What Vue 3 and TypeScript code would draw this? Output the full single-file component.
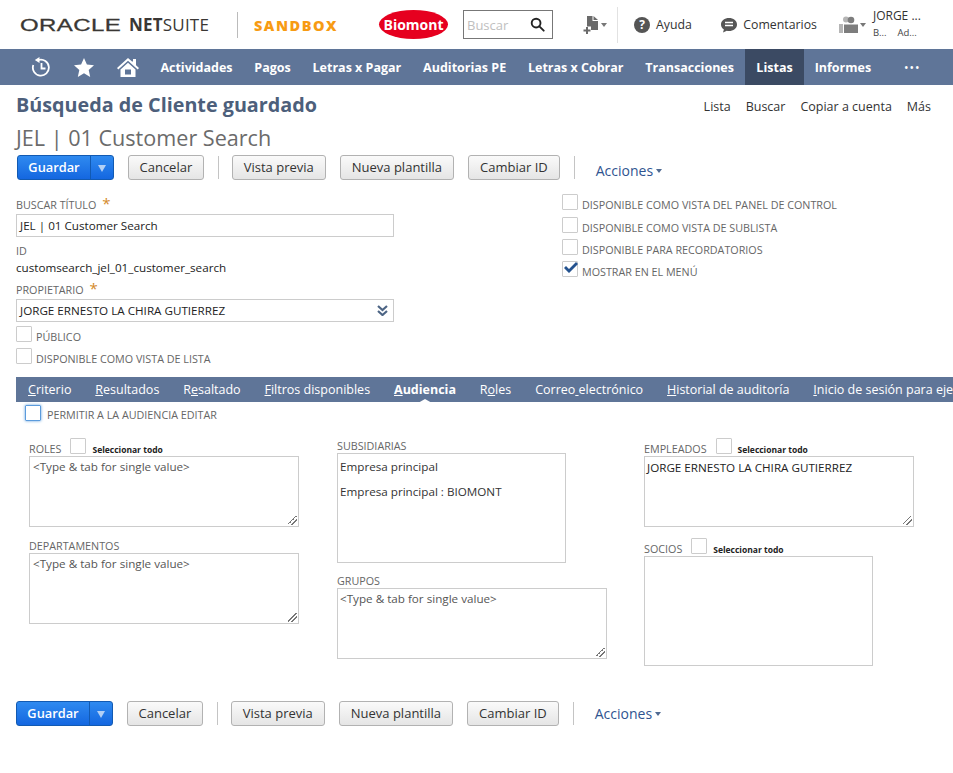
<template>
  <div class="page">
    <header class="top">
      <div class="brand">
        <span class="oracle">ORACLE</span>
        <span class="netsuite"><b>NET</b>SUITE</span>
      </div>
      <div class="brand-sep"></div>
      <span class="sandbox">SANDBOX</span>
      <div class="biomont"><span>Biomont</span></div>
      <div class="search">
        <span class="search-ph">Buscar</span>
        <svg width="15" height="15" viewBox="0 0 16 16" fill="none" stroke="#222" stroke-width="2">
          <circle cx="6.500" cy="6.500" r="4.700" />
          <path d="M10 10l4.600 4.600" stroke-linecap="round" />
        </svg>
      </div>
      <div class="new-rec">
        <svg width="16" height="18" viewBox="0 0 16 18" fill="#6a6a6a">
          <path d="M4 0h5.500v5H15v9H8v-3.500H4z" />
          <path d="M10.500 0L15 4h-4.500z" />
          <path d="M3 11h2v2.500h2.500v2H5V18H3v-2.500H.5v-2H3z" />
        </svg>
        <i class="caret"></i>
      </div>
      <div class="top-sep"></div>
      <div class="top-link help">
        <svg width="16" height="16" viewBox="0 0 16 16">
          <circle cx="8" cy="8" r="8" fill="#555" />
          <text x="8" y="12" text-anchor="middle" class="q">?</text>
        </svg>
        <span>Ayuda</span>
      </div>
      <div class="top-link comments">
        <svg width="16" height="16" viewBox="0 0 16 16" fill="#555">
          <path d="M8 1c4.200 0 8 2.500 8 6.500S12.200 14 8 14c-.8 0-1.500-.1-2.200-.3L2 15.500l.9-3C1 11.300 0 9.500 0 7.500 0 3.500 3.800 1 8 1z" />
          <path d="M4 5.500h8M4 8.500h8" stroke="#fff" stroke-width="1.500" />
        </svg>
        <span>Comentarios</span>
      </div>
      <div class="role-ico">
        <svg width="20" height="18" viewBox="0 0 20 18" fill="#b5b5b5">
          <circle cx="7" cy="3.500" r="3" />
          <path d="M0 8h4v9H0z" />
          <circle cx="12" cy="4" r="3.300" fill="#7d7d7d" />
          <path d="M5 8.500h14V17H5z" fill="#7d7d7d" />
        </svg>
        <i class="caret"></i>
      </div>
      <div class="user">
        <div class="user-name">JORGE ...</div>
        <div class="user-sub"><span>B...</span><span>Ad...</span></div>
      </div>
    </header>

    <nav class="nav">
      <div class="nav-icons">
        <svg width="20" height="20" viewBox="0 0 20 20" fill="none" stroke="#fff" stroke-width="1.800">
          <path d="M7.500 3A8 8 0 1 1 2.300 8" />
          <path d="M8.500 0L3.800 3l4.700 3z" fill="#fff" stroke="none" />
          <path d="M10.500 6v5.500h4" />
        </svg>
        <svg width="20" height="19" viewBox="0 0 20 19" fill="#fff">
          <path d="M10 0l2.900 6.400 7.100.8-5.300 4.700 1.500 7-6.200-3.600-6.200 3.600 1.500-7L0 7.200l7.100-.8z" />
        </svg>
        <svg width="22" height="19" viewBox="0 0 22 19" fill="#fff" fill-rule="evenodd">
          <path d="M11 0L0 10l1.300 1.400L11 2.700l9.700 8.700L22 10l-3-2.700V1h-3v2.500l-1 .1z" />
          <path d="M3.500 11.500L11 4.800l7.500 6.700V19h-15zM8 11.500v5h6v-5z" />
        </svg>
      </div>
      <a v-for="item in navItems" :key="item" class="nav-item" :class="{ active: item === 'Listas', after: item === 'Informes' }">{{ item }}</a>
      <span class="nav-more">•••</span>
    </nav>

    <main class="content">
      <div class="title-row">
        <h1>Búsqueda de Cliente guardado</h1>
        <div class="page-links">
          <a v-for="link in pageLinks" :key="link">{{ link }}</a>
        </div>
      </div>
      <div class="record-name">JEL | 01 Customer Search</div>

      <div class="toolbar upper">
        <div class="btn-save">
          <span class="save-label">Guardar</span>
          <span class="save-arrow"></span>
        </div>
        <button class="btn">Cancelar</button>
        <div class="tool-sep"></div>
        <button class="btn">Vista previa</button>
        <button class="btn">Nueva plantilla</button>
        <button class="btn">Cambiar ID</button>
        <div class="tool-sep"></div>
        <span class="actions">Acciones<i class="caret blue"></i></span>
      </div>

      <section class="form">
        <div class="form-left">
          <label class="lbl">BUSCAR TÍTULO <em>*</em></label>
          <div class="field">JEL | 01 Customer Search</div>
          <label class="lbl id-lbl">ID</label>
          <div class="id-val">customsearch_jel_01_customer_search</div>
          <label class="lbl owner-lbl">PROPIETARIO <em>*</em></label>
          <div class="field select">
            <span>JORGE ERNESTO LA CHIRA GUTIERREZ</span>
            <svg width="11" height="11" viewBox="0 0 11 11" fill="none" stroke="#4d6585" stroke-width="2.200">
              <path d="M1 1l4.500 4 4.500-4M1 6l4.500 4 4.500-4" />
            </svg>
          </div>
          <div class="check-row first"><span class="box"></span><span class="lbl">PÚBLICO</span></div>
          <div class="check-row"><span class="box"></span><span class="lbl">DISPONIBLE COMO VISTA DE LISTA</span></div>
        </div>
        <div class="form-right">
          <div v-for="opt in rightChecks" :key="opt.label" class="check-row">
            <span class="box">
              <svg v-if="opt.on" width="14" height="12" viewBox="0 0 14 12" fill="#24528f">
                <path d="M0 6l2-2 3 3 7-7 2 2-9 9z" />
              </svg>
            </span>
            <span class="lbl">{{ opt.label }}</span>
          </div>
        </div>
      </section>

      <div class="tabs">
        <a v-for="tab in tabs" :key="tab.text" class="tab" :class="{ active: tab.active }">{{ tab.pre }}<u>{{ tab.key }}</u>{{ tab.post }}</a>
      </div>

      <div class="edit-row">
        <span class="box focus"></span>
        <span class="lbl">PERMITIR A LA AUDIENCIA EDITAR</span>
      </div>

      <section class="audience">
        <div class="aud-col col1">
          <div class="aud-head"><span class="lbl">ROLES</span><span class="box"></span><span class="sel-all">Seleccionar todo</span></div>
          <div class="list w270 h71 ph">&lt;Type &amp; tab for single value&gt;<i class="grip"></i></div>
          <div class="aud-head plain dept"><span class="lbl">DEPARTAMENTOS</span></div>
          <div class="list w270 h71 ph">&lt;Type &amp; tab for single value&gt;<i class="grip"></i></div>
        </div>
        <div class="aud-col col2">
          <div class="aud-head plain"><span class="lbl">SUBSIDIARIAS</span></div>
          <div class="list subs">
            <div>Empresa principal</div>
            <div>Empresa principal : BIOMONT</div>
          </div>
          <div class="aud-head plain groups"><span class="lbl">GRUPOS</span></div>
          <div class="list w270 h71 ph">&lt;Type &amp; tab for single value&gt;<i class="grip"></i></div>
        </div>
        <div class="aud-col col3">
          <div class="aud-head"><span class="lbl">EMPLEADOS</span><span class="box"></span><span class="sel-all">Seleccionar todo</span></div>
          <div class="list emp">JORGE ERNESTO LA CHIRA GUTIERREZ<i class="grip"></i></div>
          <div class="aud-head partners"><span class="lbl">SOCIOS</span><span class="box"></span><span class="sel-all">Seleccionar todo</span></div>
          <div class="list socios"></div>
        </div>
      </section>

      <div class="toolbar">
        <div class="btn-save">
          <span class="save-label">Guardar</span>
          <span class="save-arrow"></span>
        </div>
        <button class="btn">Cancelar</button>
        <div class="tool-sep"></div>
        <button class="btn">Vista previa</button>
        <button class="btn">Nueva plantilla</button>
        <button class="btn">Cambiar ID</button>
        <div class="tool-sep"></div>
        <span class="actions">Acciones<i class="caret blue"></i></span>
      </div>
    </main>
  </div>
</template>

<script setup lang="ts">
interface Tab {
  text: string;
  pre: string;
  key: string;
  post: string;
  active?: boolean;
}

const navItems: string[] = [
  'Actividades',
  'Pagos',
  'Letras x Pagar',
  'Auditorias PE',
  'Letras x Cobrar',
  'Transacciones',
  'Listas',
  'Informes'
];

const pageLinks: string[] = ['Lista', 'Buscar', 'Copiar a cuenta', 'Más'];

const rightChecks = [
  { label: 'DISPONIBLE COMO VISTA DEL PANEL DE CONTROL', on: false },
  { label: 'DISPONIBLE COMO VISTA DE SUBLISTA', on: false },
  { label: 'DISPONIBLE PARA RECORDATORIOS', on: false },
  { label: 'MOSTRAR EN EL MENÚ', on: true }
];

const tabs: Tab[] = [
  { text: 'Criterio', pre: '', key: 'C', post: 'riterio' },
  { text: 'Resultados', pre: '', key: 'R', post: 'esultados' },
  { text: 'Resaltado', pre: 'R', key: 'e', post: 'saltado' },
  { text: 'Filtros disponibles', pre: '', key: 'F', post: 'iltros disponibles' },
  { text: 'Audiencia', pre: '', key: 'A', post: 'udiencia', active: true },
  { text: 'Roles', pre: 'R', key: 'o', post: 'les' },
  { text: 'Correo electrónico', pre: 'Correo', key: ' ', post: 'electrónico' },
  { text: 'Historial de auditoría', pre: '', key: 'H', post: 'istorial de auditoría' },
  { text: 'Inicio de sesión para ejecución', pre: '', key: 'I', post: 'nicio de sesión para ejecución' }
];
</script>

<style>
html,
body {
  margin: 0;
  background: #fff;
}
</style>

<style scoped>
.page {
  width: 953px;
  height: 773px;
  overflow: hidden;
  font-family: "Open Sans", "Liberation Sans", sans-serif;
  font-size: 11.660px;
  color: #222;
}

/* top bar */
.top {
  height: 49px;
  display: flex;
  align-items: center;
}
.brand {
  margin-left: 20px;
  display: flex;
  align-items: center;
  width: 190px;
  flex: none;
  white-space: nowrap;
}
.oracle {
  font-family: "Liberation Sans", sans-serif;
  font-size: 17px;
  color: #3a3734;
  display: inline-block;
  transform: translateY(1px) scaleX(1.41);
  transform-origin: left center;
  width: 109px;
  letter-spacing: 0.3px;
  -webkit-text-stroke: 0.3px #3a3734;
}
.netsuite {
  font-size: 17px;
  color: #3a3734;
  letter-spacing: 0.2px;
}
.netsuite b {
  font-weight: 700;
}
.brand-sep {
  width: 1px;
  height: 26px;
  background: #bbb;
  margin-left: 27px;
  flex: none;
}
.sandbox {
  margin-left: 16px;
  width: 84px;
  flex: none;
  font-size: 14.500px;
  font-weight: 800;
  letter-spacing: 1.500px;
  color: #f79b13;
  padding-top: 2px;
}
.biomont {
  margin-left: 41px;
  width: 69px;
  height: 29px;
  flex: none;
  border-radius: 50%;
  background: #e6001f;
  display: flex;
  align-items: center;
  justify-content: center;
}
.biomont span {
  color: #fff;
  font-size: 14px;
  font-weight: 700;
}
.search {
  margin-left: 15px;
  width: 90px;
  height: 29px;
  border: 1px solid #777;
  box-sizing: border-box;
  display: flex;
  align-items: center;
  justify-content: space-between;
  padding: 0 7px 0 3px;
  flex: none;
}
.search-ph {
  font-size: 13px;
  color: #c0c0c0;
}
.new-rec {
  margin-left: 30px;
  display: flex;
  align-items: center;
  gap: 2px;
  flex: none;
  width: 27px;
}
.caret {
  display: inline-block;
  width: 0;
  height: 0;
  border-left: 3.500px solid transparent;
  border-right: 3.500px solid transparent;
  border-top: 4px solid #777;
}
.top-sep {
  width: 1px;
  height: 36px;
  background: #e2e2e2;
  margin-left: 7px;
  flex: none;
}
.top-link {
  display: flex;
  align-items: center;
  gap: 6px;
  font-size: 12.300px;
  color: #333;
  flex: none;
}
.help {
  margin-left: 16px;
}
.comments {
  margin-left: 29.500px;
}
.q {
  font-size: 12px;
  font-weight: 700;
  fill: #fff;
}
.role-ico {
  margin-left: 22px;
  width: 30px;
  display: flex;
  align-items: center;
  gap: 1px;
  flex: none;
}
.user {
  margin-left: 4px;
  line-height: 1;
  margin-top: -2px;
}
.user-name {
  font-size: 12px;
  color: #333;
  margin-bottom: 6px;
}
.user-sub {
  font-size: 9.500px;
  color: #444;
  display: flex;
  gap: 11px;
}

/* main nav */
.nav {
  height: 36px;
  background: #5f7598;
  display: flex;
  align-items: stretch;
  padding-left: 31px;
}
.nav-icons {
  display: flex;
  align-items: center;
  gap: 23px;
  margin-right: 10.500px;
}
.nav-item {
  display: flex;
  align-items: center;
  padding: 0 10.900px;
  color: #fff;
  font-size: 12.500px;
  font-weight: 700;
}
.nav-item.active {
  background: #3b4a63;
  padding: 0 11px 0 11.500px;
}
.nav-item.after {
  padding-left: 11px;
}
.nav-more {
  align-self: center;
  margin-left: 22px;
  color: #fff;
  font-size: 12px;
  letter-spacing: 1px;
}

/* content */
.content {
  padding-left: 16px;
}
.title-row {
  display: flex;
  justify-content: space-between;
  align-items: center;
  height: 27px;
  margin-top: 6px;
  padding-right: 22px;
}
h1 {
  margin: 0;
  font-size: 19.750px;
  font-weight: 700;
  color: #4d5f7b;
}
.page-links {
  display: flex;
  gap: 15px;
  font-size: 12.500px;
  color: #333;
  margin-top: 4px;
}
.record-name {
  font-size: 21.600px;
  color: #6b6b6b;
  height: 34px;
  line-height: 34px;
  padding-top: 3px;
}
.toolbar {
  display: flex;
  align-items: center;
  height: 25px;
}
.toolbar.upper {
  margin-left: 1px;
}
.toolbar.upper .actions {
  margin-top: 6px;
}
.btn-save {
  width: 97px;
  height: 25px;
  box-sizing: border-box;
  border-radius: 3px;
  border: 1px solid #125ab2;
  background: linear-gradient(#2f8af0, #1467e0);
  display: flex;
  flex: none;
}
.save-label {
  width: 73px;
  box-sizing: border-box;
  color: #fff;
  font-size: 12.800px;
  font-weight: 600;
  text-align: center;
  line-height: 22px;
  border-right: 1px solid #125ab2;
}
.save-arrow {
  flex: 1;
  position: relative;
}
.save-arrow::after {
  content: "";
  position: absolute;
  left: 7px;
  top: 9px;
  border-left: 4px solid transparent;
  border-right: 4px solid transparent;
  border-top: 7px solid #b3d0f5;
}
.btn {
  height: 25px;
  padding: 0 11px 1px;
  box-sizing: border-box;
  border: 1px solid #b2b2b2;
  border-radius: 3px;
  background: linear-gradient(#fafafa, #e5e5e5);
  font-family: inherit;
  font-size: 13px;
  color: #333;
  margin-right: 14px;
  flex: none;
}
.btn-save + .btn {
  margin-left: 14px;
  padding: 0 10.500px 1px;
}
.tool-sep {
  width: 1px;
  height: 23px;
  background: #c4c4c4;
  margin-right: 13px;
  flex: none;
}
.actions {
  margin-left: 8px;
  font-size: 14px;
  color: #2f5490;
  display: flex;
  align-items: center;
  gap: 3px;
}
.caret.blue {
  border-top-color: #4f6a92;
}

/* form */
.form {
  display: flex;
  margin-top: 18px;
  height: 179px;
}
.form-left {
  width: 378px;
  flex: none;
}
.form-right {
  margin-left: 168px;
  margin-top: -7px;
}
.lbl {
  display: block;
  font-size: 10.750px;
  color: #666;
  line-height: 15px;
  white-space: nowrap;
}
.lbl em {
  font-style: normal;
  font-size: 15px;
  line-height: 10px;
  color: #d48a2a;
  margin-left: 3px;
}
.field {
  height: 23px;
  box-sizing: border-box;
  border: 1px solid #ccc;
  line-height: 21px;
  padding-left: 3px;
  margin-top: 1px;
  color: #222;
}
.select {
  display: flex;
  justify-content: space-between;
  align-items: center;
  padding-right: 5px;
}
.id-lbl {
  margin-top: 7px;
}
.id-val {
  line-height: 17px;
  color: #222;
}
.owner-lbl {
  margin-top: 7px;
}
.check-row {
  display: flex;
  align-items: flex-end;
  height: 22.330px;
  gap: 4px;
}
.form-left .check-row {
  height: 22.500px;
}
.form-left .check-row.first {
  margin-top: 2px;
  height: 20.500px;
}
.box {
  display: inline-block;
  position: relative;
  width: 16px;
  height: 16px;
  box-sizing: border-box;
  border: 1px solid #ccc;
  border-radius: 1px;
  flex: none;
  margin-bottom: 3px;
}
.box svg {
  position: absolute;
  left: 1px;
  top: 0;
}
.check-row .lbl {
  line-height: 16px;
}

/* tabs */
.tabs {
  height: 25px;
  background: #5f7598;
  display: flex;
  align-items: center;
  padding-left: 12px;
  gap: 23.900px;
  white-space: nowrap;
  overflow: hidden;
}
.tab {
  color: #fff;
  font-size: 12.500px;
  position: relative;
  white-space: pre;
}
.tab.active {
  font-weight: 700;
}
.tab.active::after {
  content: "";
  position: absolute;
  left: 50%;
  margin-left: -7px;
  bottom: -5px;
  border-left: 7px solid transparent;
  border-right: 7px solid transparent;
  border-bottom: 4px solid #fff;
}
.edit-row {
  display: flex;
  align-items: center;
  gap: 6px;
  padding-left: 9px;
  height: 24px;
}
.edit-row .lbl {
  margin-top: 2px;
}
.box.focus {
  border: 1px solid #5b9bdc;
  box-shadow: 0 0 3px #5b9bdc;
}

/* audience */
.audience {
  display: flex;
  margin-top: 12px;
  padding-left: 13px;
  height: 263px;
}
.aud-col {
  flex: none;
}
.col1 {
  width: 308px;
}
.col2 {
  width: 307px;
}
.aud-head {
  height: 18px;
  display: flex;
  align-items: flex-end;
  gap: 6px;
}
.aud-head .lbl {
  line-height: 15px;
  margin-right: 3px;
  margin-bottom: -1px;
}
.aud-head .box {
  margin-bottom: 2px;
}
.aud-head.plain {
  height: 15px;
}
.sel-all {
  font-size: 8.500px;
  font-weight: 700;
  line-height: 13px;
  color: #222;
}
.list {
  box-sizing: border-box;
  border: 1px solid #ccc;
  position: relative;
  color: #333;
}
.w270 {
  width: 270px;
}
.h71 {
  height: 71px;
}
.ph {
  padding: 2px 3px;
  color: #555;
}
.col2 .ph {
  padding-left: 2px;
}
.subs {
  width: 229px;
  height: 110px;
  padding: 0 2px;
  line-height: 25px;
}
.emp {
  width: 270px;
  height: 71px;
  padding: 3px 2px;
  color: #222;
}
.socios {
  width: 229px;
  height: 110px;
}
.dept {
  margin-top: 11px;
}
.groups {
  margin-top: 10px;
}
.partners {
  margin-top: 11px;
}
.grip {
  position: absolute;
  right: 1px;
  bottom: 1px;
  width: 9px;
  height: 9px;
  background: linear-gradient(135deg, transparent 40%, #777 40%, #777 50%, transparent 50%, transparent 65%, #777 65%, #777 75%, transparent 75%);
}
</style>
